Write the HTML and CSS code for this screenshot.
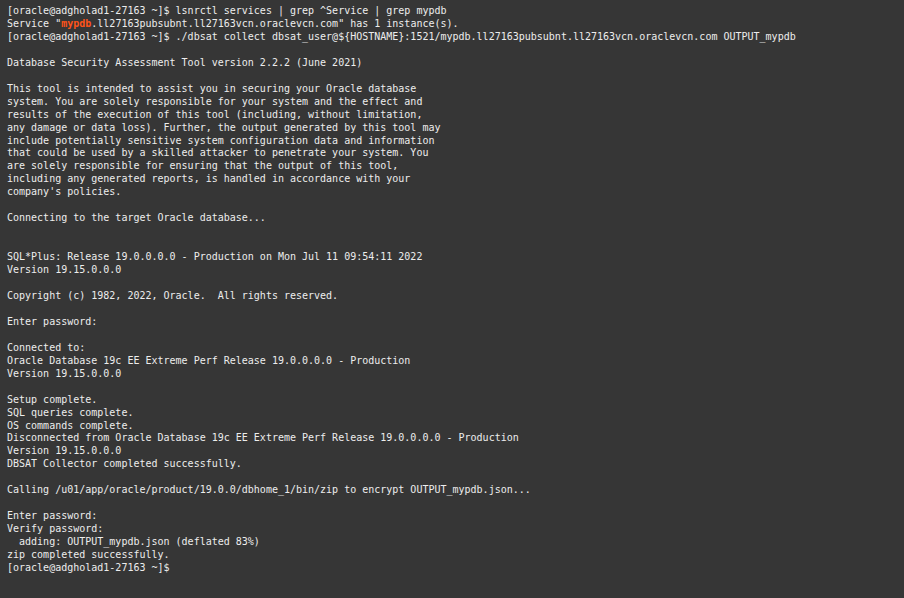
FILE: index.html
```html
<!DOCTYPE html>
<html>
<head>
<meta charset="utf-8">
<link rel="stylesheet" href="styles.css">
</head>
<body>
<main class="terminal">
<pre class="output">[oracle@adgholad1-27163 ~]$ lsnrctl services | grep ^Service | grep mypdb
Service "<span class="hl">mypdb</span>.ll27163pubsubnt.ll27163vcn.oraclevcn.com" has 1 instance(s).
[oracle@adgholad1-27163 ~]$ ./dbsat collect dbsat_user@${HOSTNAME}:1521/mypdb.ll27163pubsubnt.ll27163vcn.oraclevcn.com OUTPUT_mypdb

Database Security Assessment Tool version 2.2.2 (June 2021)

This tool is intended to assist you in securing your Oracle database
system. You are solely responsible for your system and the effect and
results of the execution of this tool (including, without limitation,
any damage or data loss). Further, the output generated by this tool may
include potentially sensitive system configuration data and information
that could be used by a skilled attacker to penetrate your system. You
are solely responsible for ensuring that the output of this tool,
including any generated reports, is handled in accordance with your
company's policies.

Connecting to the target Oracle database...


SQL*Plus: Release 19.0.0.0.0 - Production on Mon Jul 11 09:54:11 2022
Version 19.15.0.0.0

Copyright (c) 1982, 2022, Oracle.  All rights reserved.

Enter password:

Connected to:
Oracle Database 19c EE Extreme Perf Release 19.0.0.0.0 - Production
Version 19.15.0.0.0

Setup complete.
SQL queries complete.
OS commands complete.
Disconnected from Oracle Database 19c EE Extreme Perf Release 19.0.0.0.0 - Production
Version 19.15.0.0.0
DBSAT Collector completed successfully.

Calling /u01/app/oracle/product/19.0.0/dbhome_1/bin/zip to encrypt OUTPUT_mypdb.json...

Enter password:
Verify password:
  adding: OUTPUT_mypdb.json (deflated 83%)
zip completed successfully.
[oracle@adgholad1-27163 ~]$</pre>
</main>
</body>
</html>
```
FILE: styles.css
```css
html, body {
  margin: 0;
  padding: 0;
  background: #363636;
  height: 100%;
}
.terminal {
  padding: 5px 7px;
  box-sizing: border-box;
  min-height: 100%;
  background: #363636;
}
.output {
  margin: 0;
  font-family: "DejaVu Sans Mono", "Liberation Mono", monospace;
  font-size: 10px;
  line-height: 12.95px;
  color: #ededed;
  white-space: pre;
}
.hl {
  color: #ff5319;
  font-weight: bold;
}
```
